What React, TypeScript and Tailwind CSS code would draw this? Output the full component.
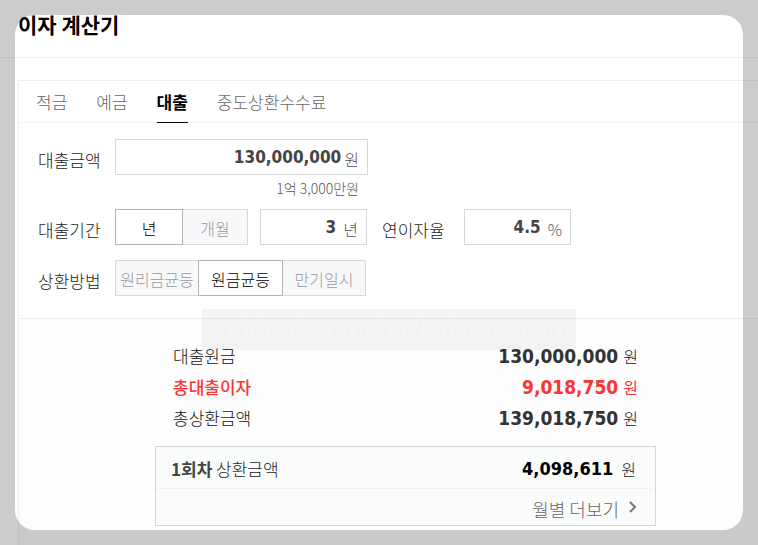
import { useState } from "react"
import { clsx } from "clsx"

const tabs = ["적금", "예금", "대출", "중도상환수수료"]
const methods = ["원리금균등", "원금균등", "만기일시"]

const results = [
  { label: "대출원금", value: "130,000,000" },
  { label: "총대출이자", value: "9,018,750", accent: true },
  { label: "총상환금액", value: "139,018,750" },
]

const num = "font-['DejaVu_Sans_Condensed','DejaVu_Sans',sans-serif] font-bold"

function Toggle({ label, active, width, onClick }: { label: string; active: boolean; width: string; onClick: () => void }) {
  return (
    <button
      type="button"
      aria-pressed={active}
      onClick={onClick}
      className={clsx(
        "h-9 border text-[16px] leading-6 whitespace-nowrap pt-[2px]",
        width,
        active ? "relative border-[#b4b4b4] bg-white text-black" : "border-[#d7d9dc] bg-[#f7f8fa] text-[#999]"
      )}
    >
      {label}
    </button>
  )
}

function Field({ id, unit, defaultValue, className }: { id: string; unit: string; defaultValue: string; className: string }) {
  return (
    <div className={clsx("flex h-9 items-center border border-[#d5d7d9] bg-white pr-2", className)}>
      <input id={id} defaultValue={defaultValue} className={clsx("min-w-0 flex-1 bg-transparent text-right text-[17px] leading-6 text-[#444] outline-none", num)} />
      <span className="pt-1 text-[16px] leading-6 text-[#555]">{unit}</span>
    </div>
  )
}

export default function App() {
  const [tab, setTab] = useState("대출")
  const [unit, setUnit] = useState("년")
  const [method, setMethod] = useState("원금균등")

  const label = "shrink-0 pt-[6px] text-[17px] leading-6 text-[#222]"

  return (
    <div className="relative min-h-screen overflow-hidden bg-white font-['Noto_Sans_CJK_KR',sans-serif] font-light">
      <header className="border-b border-[#efefef] pt-3 pb-[21px] pl-[18px]">
        <h1 className="text-[21px] leading-6 font-bold text-black">이자 계산기</h1>
      </header>

      <main className="mt-[22px] ml-[18px] border-t border-l border-[#eee]">
        <nav className="flex gap-[29px] border-b border-[#f2f2f2] pl-[17px]">
          {tabs.map((t) => (
            <button
              key={t}
              type="button"
              onClick={() => setTab(t)}
              className={clsx("-mb-px h-[42px] border-b text-[17px] leading-6", tab === t ? "border-black font-bold text-black" : "border-transparent text-[#666]")}
            >
              {t}
            </button>
          ))}
        </nav>

        <form className="border-b border-[#eee] pt-4 pb-[22px] pl-[19px]" onSubmit={(e) => e.preventDefault()}>
          <div className="flex items-center">
            <label htmlFor="amount" className={clsx(label, "w-[77px]")}>대출금액</label>
            <Field id="amount" unit="원" defaultValue="130,000,000" className="w-[253px] gap-[3px]" />
          </div>
          <p className="mb-2 w-[321px] text-right text-[14px] leading-[26px] text-[#555]">1억 3,000만원</p>

          <div className="flex items-center">
            <label htmlFor="period" className={clsx(label, "w-[77px]")}>대출기간</label>
            <Toggle label="년" width="w-[68px]" active={unit === "년"} onClick={() => setUnit("년")} />
            <Toggle label="개월" width="w-[66px] -ml-px" active={unit === "개월"} onClick={() => setUnit("개월")} />
            <Field id="period" unit={unit} defaultValue="3" className="ml-3 w-[107px] gap-[7px]" />
            <label htmlFor="rate" className={clsx(label, "ml-[15px] w-[82px]")}>연이자율</label>
            <Field id="rate" unit="%" defaultValue="4.5" className="w-[107px] gap-[7px]" />
          </div>

          <div className="mt-[15px] flex items-center" role="group" aria-labelledby="method">
            <span id="method" className={clsx(label, "w-[77px]")}>상환방법</span>
            {methods.map((m, i) => (
              <Toggle key={m} label={m} width={i === 1 ? "w-[85px] -ml-px" : i === 0 ? "w-[84px]" : "w-[84px] -ml-px"} active={method === m} onClick={() => setMethod(m)} />
            ))}
          </div>
        </form>

        <section className="bg-[#fdfdfd] pt-[21px] pb-[19px] pl-[136px]">
          <div className="max-w-[501px]">
            <dl className="pr-[18px] pl-[18px]">
              {results.map((r) => (
                <div key={r.label} className={clsx("flex h-[31px] items-center", r.accent ? "text-[#fb3434]" : "text-[#111]")}>
                  <dt className={clsx("flex-1 text-[17px] leading-6", r.accent && "font-medium")}>{r.label}</dt>
                  <dd className="flex items-center gap-[5px]">
                    <span className={clsx("text-[19px] leading-6", num, !r.accent && "text-[#333]")}>{r.value}</span>
                    <span className={clsx("text-[16px] leading-6", r.accent && "font-normal")}>원</span>
                  </dd>
                </div>
              ))}
            </dl>

            <div className="mt-[13px] border border-[#d5d7d7] bg-[#fafcfb]">
              <div className="mr-[3px] flex h-[42px] items-center border-b border-[#f0f2f1] pt-[2px] pr-4 pl-[15px] text-[17px] leading-6 text-[#222]">
                <p className="flex-1"><strong className="font-bold text-[#444]">1회차</strong> 상환금액</p>
                <span className={clsx("text-[18px] text-black", num)}>4,098,611</span>
                <span className="ml-2 text-[16px]">원</span>
              </div>
              <div className="flex h-9 items-center justify-end pt-1 pr-[17px]">
                <a href="#monthly" className="flex items-center gap-2 text-[18px] leading-6 text-[#666]">
                  월별 더보기
                  <svg width="11" height="14" viewBox="0 0 11 14" fill="none" stroke="#777" strokeWidth="2" className="mb-1" aria-hidden="true">
                    <path d="M3 2l5 5-5 5" />
                  </svg>
                </a>
              </div>
            </div>
          </div>
        </section>
      </main>

      {/* watermark */}
      <div className="pointer-events-none absolute top-[309px] left-[202px] flex h-[41px] w-[374px] items-center justify-center bg-black/[0.045] pb-1 font-['Noto_Sans',sans-serif] text-[25px] leading-8 font-normal text-white/25">
        suddenlycomeback.tistory.com
      </div>

      {/* dimmed frame around the rounded window */}
      <div className="pointer-events-none absolute inset-[15px] rounded-[20px] shadow-[0_0_0_400px_rgba(0,0,0,0.2)]" />
    </div>
  )
}
